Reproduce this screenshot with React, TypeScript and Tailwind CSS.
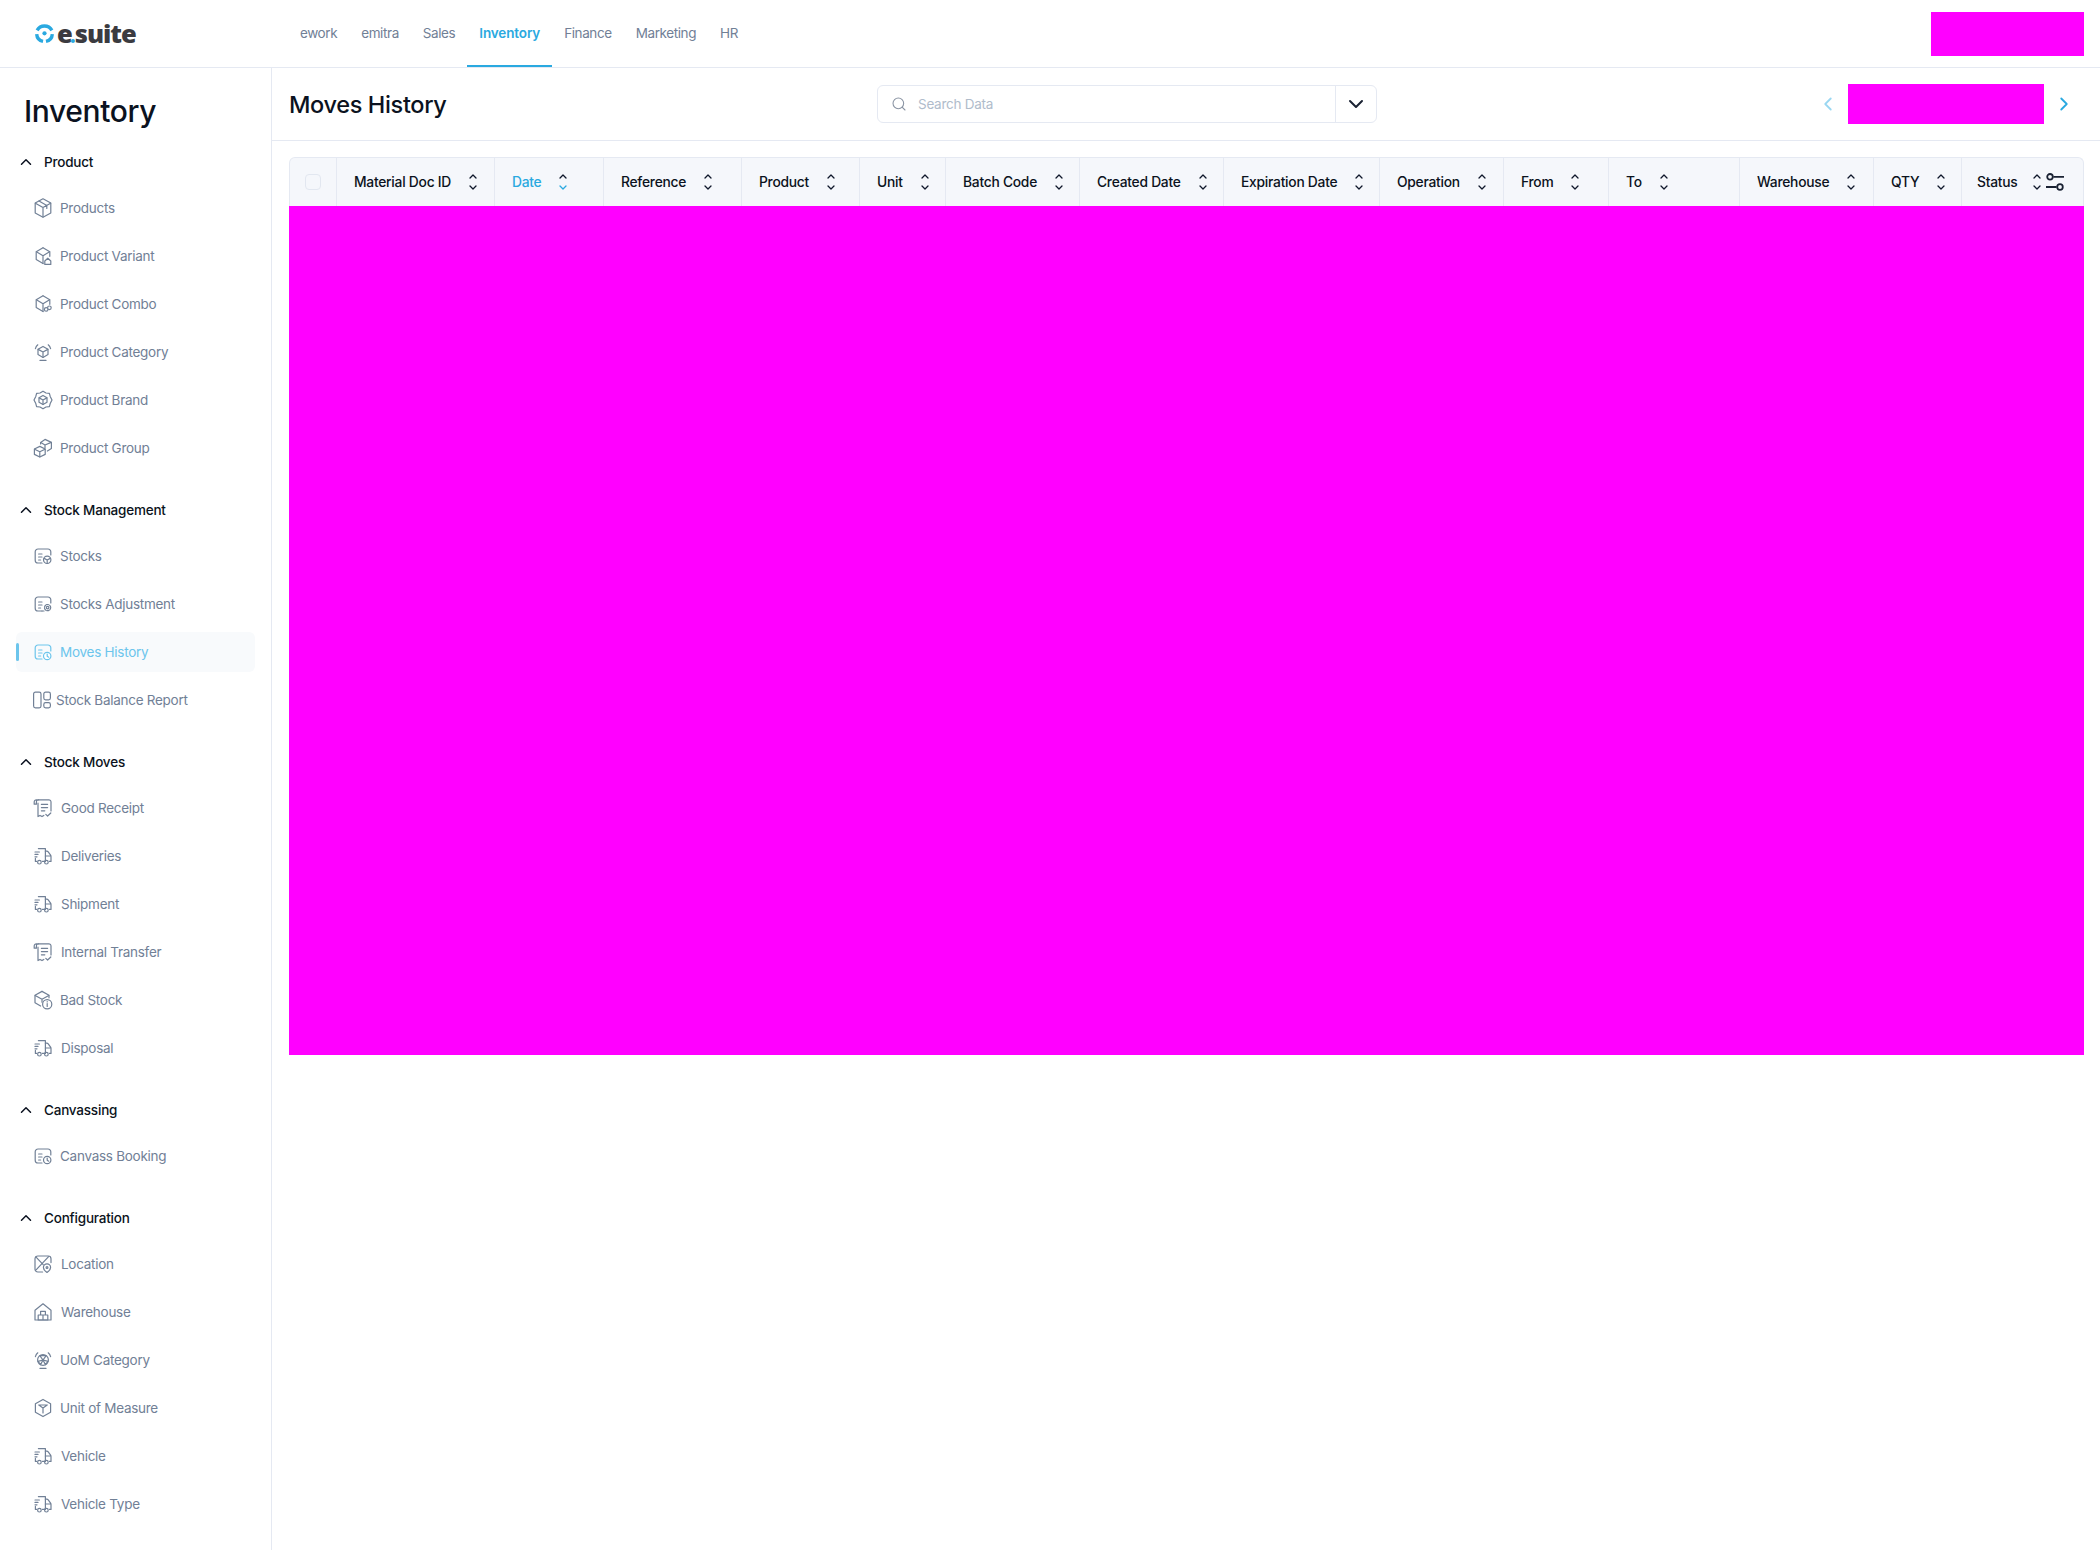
import { ChevronDown, ChevronLeft, ChevronRight, ChevronUp, Search } from 'lucide-react';
import type { ReactNode } from 'react';

type IconName =
  | 'box' | 'boxHome' | 'boxLink' | 'boxWifi' | 'brand' | 'group' | 'stock' | 'stockGear' | 'stockClock'
  | 'layout' | 'receipt' | 'truck' | 'boxInfo' | 'location' | 'warehouse' | 'fan' | 'unit';

const cube = (
  <>
    <path d="M10 1.8 16.8 5.7v4.6" />
    <path d="M10 1.8 3.2 5.7v7.8L10 17.6" />
    <path d="M3.4 5.8 10 9.7l6.6-3.9M10 9.7v7.8" />
  </>
);

const card = <path d="M9 17H5a2.8 2.8 0 0 1-2.8-2.8V5.8A2.8 2.8 0 0 1 5 3h10a2.8 2.8 0 0 1 2.8 2.8V9" />;
const lines = <path d="M5.6 8h3.4M5.6 11h3.4M5.6 14h2" />;

const truck = (
  <>
    <path d="M5.4 2.6h7v12.8H9.4M3.6 15.4H2.4V12.4" />
    <path d="M2 6h4.4M2 8.4h3M2 10.8h2" />
    <path d="M12.4 5.2h1.4c.6 0 1 .2 1.4.7l2.4 3.3c.3.4.4.8.4 1.3v4.9h-1.6M12.4 10h5.4" />
    <circle cx="6.4" cy="16.2" r="1.8" />
    <circle cx="13.4" cy="16.2" r="1.8" />
  </>
);

const icons: Record<IconName, ReactNode> = {
  box: (
    <>
      <path d="M10 .8 17.8 5v10L10 19.2 2.2 15V5z" />
      <path d="M2.4 5.2 10 9.6l7.6-4.4M10 9.6v9.4M6 3l7.8 4.4v3" />
    </>
  ),
  boxHome: (
    <>
      {cube}
      <path d="m11.8 15 3-2.8 3 2.8v3.4h-6z" fill="#fff" />
    </>
  ),
  boxLink: (
    <>
      {cube}
      <circle cx="13.2" cy="15.4" r="1.8" fill="#fff" />
      <circle cx="16.4" cy="13.8" r="1.8" fill="#fff" />
    </>
  ),
  boxWifi: (
    <>
      <path d="M10 4.4 15 7.2v5.4L10 15.4l-5-2.8V7.2z" />
      <path d="M5.2 7.4 10 10l4.8-2.6M10 10v5.2" />
      <path d="M2.4 6.6A8.4 8.4 0 0 1 4.8 2.8M17.6 6.6a8.4 8.4 0 0 0-2.4-3.8M7 18.4h6" />
    </>
  ),
  brand: (
    <>
      <path d="M10 1.2 13 3l3.4.4.8 3L19 10l-1.8 3.6-.8 3-3.4.4L10 18.8 7 17l-3.4-.4-.8-3L1 10l1.8-3.6.8-3L7 3z" />
      <path d="M10 5.4 14 7.7v4.6l-4 2.3-4-2.3V7.7z" />
      <path d="M6.2 7.9 10 10l3.8-2.1M10 10v4.4" />
    </>
  ),
  group: (
    <>
      <path d="M12 1.4 18.4 4.4v6.2L14.4 13M7.6 6V4.4L12 1.4" />
      <path d="M7.8 4.6 12 7l6.2-2.6M12 7v3" />
      <path d="M6.8 8.4 12.2 11v5.4L6.8 19 1.4 16.4V11z" />
      <path d="M1.6 11.2 6.8 13.8 12 11.2M6.8 13.8v5" />
    </>
  ),
  stock: (
    <>
      {card}
      {lines}
      <circle cx="14.2" cy="13.8" r="3.7" fill="#fff" />
      <path d="M11.2 12.4 14.2 14l3-1.6M14.2 14v3.4" />
    </>
  ),
  stockGear: (
    <>
      {card}
      {lines}
      <path d="M9 17h2" />
      <circle cx="14.6" cy="13.6" r="1.3" />
      <circle cx="14.6" cy="13.6" r="3.1" strokeDasharray="2.2 1.1" />
    </>
  ),
  stockClock: (
    <>
      {card}
      {lines}
      <circle cx="14.2" cy="14" r="3.7" fill="#fff" />
      <path d="M14.2 12v2.2l1.5 1" />
    </>
  ),
  layout: (
    <>
      <rect x="1.6" y="2.2" width="7.4" height="15.6" rx="1.8" />
      <rect x="11.8" y="2.2" width="6.6" height="7.6" rx="1.8" />
      <rect x="11.8" y="12.6" width="6.6" height="5.2" rx="1.8" />
    </>
  ),
  receipt: (
    <>
      <path d="M5.6 1.8h10.2a2.2 2.2 0 0 1 2.2 2.2v9" />
      <path d="M5.6 1.8A2.2 2.2 0 0 0 3.4 4v2.2H1.2V4a2.2 2.2 0 0 1 2.2-2.2z" />
      <path d="M5 5.2v13.4l2-1.2 2 1.2 1.8-1.2" />
      <path d="M8.4 6.4h6.2M8.4 9.6h6.2M8.4 12.8h3.4" />
      <path d="m12.8 16.4 1.8 1.6 3.2-3" />
    </>
  ),
  truck,
  boxInfo: (
    <>
      <path d="M9 1.4 16 5.2v2.6" />
      <path d="M9 1.4 2 5.2v7.6l5.6 3.2" />
      <path d="M2.2 5.4 9 9.2l6.8-3.8M9 9.2v3" />
      <circle cx="14.2" cy="14.2" r="4.6" fill="#fff" />
      <path d="M14.2 13.6v2.8M14.2 11.7v.2" />
    </>
  ),
  location: (
    <>
      <path d="M9.6 18H4.8a2.8 2.8 0 0 1-2.8-2.8V4.8A2.8 2.8 0 0 1 4.8 2h10.4A2.8 2.8 0 0 1 18 4.8v3.8" />
      <path d="m2.8 2.8 7.4 7.8M2.6 16.4 15.6 2.6" />
      <path d="M14 9.8a3.6 3.6 0 0 1 3.6 3.6c0 2.4-3.6 5-3.6 5s-3.6-2.6-3.6-5A3.6 3.6 0 0 1 14 9.8z" fill="#fff" />
      <circle cx="14" cy="13.4" r=".9" />
    </>
  ),
  warehouse: (
    <>
      <path d="M2 18V8.2l8-6.4 8 6.4V18z" />
      <path d="M7.6 9.4h4.8V13H7.6zM5.2 13H10v5H5.2zM10 13h4.8v5H10z" />
    </>
  ),
  fan: (
    <>
      <circle cx="10" cy="10" r="5.4" />
      <path d="M10 10 6.8 5.6h6.4zM10 10l-5 1.4 2.6 3.2zM10 10l5 1.4-2.6 3.2z" />
      <path d="M2.4 6.6A8.4 8.4 0 0 1 4.8 2.8M17.6 6.6a8.4 8.4 0 0 0-2.4-3.8M7 18.4h6" />
    </>
  ),
  unit: (
    <>
      <path d="M10 1.4 17.6 5.7v8.6L10 18.6l-7.6-4.3V5.7z" />
      <path d="M5.8 7 10 10l4.2-3M10 10v5M5.8 7h8.4" />
    </>
  ),
};

function MenuIcon({ name }: { name: IconName }) {
  return (
    <svg viewBox="0 0 20 20" fill="none" stroke="currentColor" strokeWidth="1.2" strokeLinecap="round" strokeLinejoin="round" className="h-5 w-5 shrink-0">
      {icons[name]}
    </svg>
  );
}

interface MenuItem {
  label: string;
  icon: IconName;
  active?: boolean;
}

const menu: { title: string; items: MenuItem[] }[] = [
  {
    title: 'Product',
    items: [
      { label: 'Products', icon: 'box' },
      { label: 'Product Variant', icon: 'boxHome' },
      { label: 'Product Combo', icon: 'boxLink' },
      { label: 'Product Category', icon: 'boxWifi' },
      { label: 'Product Brand', icon: 'brand' },
      { label: 'Product Group', icon: 'group' },
    ],
  },
  {
    title: 'Stock Management',
    items: [
      { label: 'Stocks', icon: 'stock' },
      { label: 'Stocks Adjustment', icon: 'stockGear' },
      { label: 'Moves History', icon: 'stockClock', active: true },
      { label: 'Stock Balance Report', icon: 'layout' },
    ],
  },
  {
    title: 'Stock Moves',
    items: [
      { label: 'Good Receipt', icon: 'receipt' },
      { label: 'Deliveries', icon: 'truck' },
      { label: 'Shipment', icon: 'truck' },
      { label: 'Internal Transfer', icon: 'receipt' },
      { label: 'Bad Stock', icon: 'boxInfo' },
      { label: 'Disposal', icon: 'truck' },
    ],
  },
  { title: 'Canvassing', items: [{ label: 'Canvass Booking', icon: 'stockClock' }] },
  {
    title: 'Configuration',
    items: [
      { label: 'Location', icon: 'location' },
      { label: 'Warehouse', icon: 'warehouse' },
      { label: 'UoM Category', icon: 'fan' },
      { label: 'Unit of Measure', icon: 'unit' },
      { label: 'Vehicle', icon: 'truck' },
      { label: 'Vehicle Type', icon: 'truck' },
    ],
  },
];

const modules = ['ework', 'emitra', 'Sales', 'Inventory', 'Finance', 'Marketing', 'HR'];

const columns = [
  { label: 'Material Doc ID', width: 'w-[158px]' },
  { label: 'Date', width: 'w-[109px]', active: true },
  { label: 'Reference', width: 'w-[138px]' },
  { label: 'Product', width: 'w-[118px]' },
  { label: 'Unit', width: 'w-[86px]' },
  { label: 'Batch Code', width: 'w-[134px]' },
  { label: 'Created Date', width: 'w-[144px]' },
  { label: 'Expiration Date', width: 'w-[156px]' },
  { label: 'Operation', width: 'w-[124px]' },
  { label: 'From', width: 'w-[105px]' },
  { label: 'To', width: 'w-[131px]' },
  { label: 'Warehouse', width: 'w-[134px]' },
  { label: 'QTY', width: 'w-[88px]' },
];

function SortIcon({ active }: { active?: boolean }) {
  return (
    <svg viewBox="0 0 12 20" fill="none" stroke="#0f172a" strokeWidth="1.3" strokeLinecap="round" strokeLinejoin="round" className="h-5 w-3 shrink-0">
      <path d="m3 6 3-3 3 3" />
      <path d="m3 14 3 3 3-3" stroke={active ? '#2aa9e0' : '#0f172a'} />
    </svg>
  );
}

function Logo() {
  return (
    <div className="flex w-[288px] items-center pl-[35px]">
      <svg viewBox="0 0 18 18" className="h-[19px] w-[19px] shrink-0" fill="none" stroke="#2aa9e0" strokeWidth="3.2">
        <path d="M2 6a8 8 0 0 1 14 0" />
        <path d="M1.6 9.5A7.6 7.6 0 0 0 7.6 16.4M16.4 9.5a7.6 7.6 0 0 1-6 6.9" />
        <circle cx="9" cy="8.8" r="2" fill="#2aa9e0" stroke="none" />
      </svg>
      <div className="ml-[3px] flex items-baseline font-['Open_Sans',sans-serif] text-[25.5px] leading-none font-extrabold tracking-[-0.04em] text-[#3b3b40]">
        e
        <span className="relative h-1 w-[3px]">
          <span className="absolute bottom-0 -left-px h-1 w-1 rounded-full bg-[#2aa9e0]" />
        </span>
        suite
      </div>
    </div>
  );
}

function itemGap(icon: IconName) {
  if (icon === 'layout') return 'gap-1 -ml-px';
  if (icon === 'truck' || icon === 'receipt' || icon === 'location' || icon === 'warehouse') return 'gap-2';
  return 'gap-[7px]';
}

function Sidebar() {
  return (
    <aside className="w-[272px] shrink-0 border-r border-[#e5e9f2] pl-4">
      <h1 className="mt-[25px] ml-2 text-[30px] leading-9 font-medium tracking-[-0.012em] text-[#0b1220]">Inventory</h1>
      <div className="mt-[23px] flex flex-col gap-8">
        {menu.map((group) => (
          <section key={group.title}>
            <div className="flex h-5 items-center gap-[9px] pl-px text-[13.5px] font-medium tracking-[-0.015em] text-[#0b1220]">
              <ChevronUp className="h-[18px] w-[18px]" strokeWidth={2} />
              {group.title}
            </div>
            <ul className="mt-4 flex flex-col gap-2">
              {group.items.map((item) => (
                <li
                  key={item.label}
                  className={
                    item.active
                      ? `relative flex h-10 w-[239px] items-center rounded-md bg-[#f8fafc] pl-[17px] text-[13.5px] tracking-[-0.02em] text-[#6cc5ec] ${itemGap(item.icon)}`
                      : `flex h-10 w-[239px] items-center pl-[17px] text-[13.5px] tracking-[-0.02em] text-[#718096] ${itemGap(item.icon)}`
                  }
                >
                  {item.active && <span className="absolute top-[11px] left-0 h-[18px] w-[3px] rounded-sm bg-[#6cc5ec]" />}
                  <MenuIcon name={item.icon} />
                  {item.label}
                </li>
              ))}
            </ul>
          </section>
        ))}
      </div>
    </aside>
  );
}

function Toolbar() {
  return (
    <div className="flex h-[73px] items-center border-b border-[#e5e9f2] pr-[25px]">
      <h2 className="w-[605px] pt-0.5 pl-[17px] text-[23.5px] leading-8 font-medium tracking-[-0.015em] text-[#0b1220]">Moves History</h2>
      <div className="flex h-[38px] w-[500px] items-center rounded-md border border-[#e5e9f2]">
        <Search className="ml-[13px] h-4 w-4 text-[#8a94a3]" strokeWidth={1.6} />
        <span className="ml-[11px] flex-1 text-[13.5px] tracking-[-0.02em] text-[#b0bccb]">Search Data</span>
        <div className="flex h-full w-[41px] items-center justify-center border-l border-[#e5e9f2]">
          <ChevronDown className="h-6 w-6 text-[#1a2233]" strokeWidth={2} />
        </div>
      </div>
      <div className="ml-auto flex items-center gap-[9px]">
        <ChevronLeft className="h-[22px] w-[22px] text-[#9ad7f2]" strokeWidth={2} />
        <div className="h-10 w-[196px] bg-[#ff00ff]" />
        <ChevronRight className="h-[22px] w-[22px] text-[#2aa9e0]" strokeWidth={2} />
      </div>
    </div>
  );
}

function MovesTable() {
  return (
    <div className="mt-4 mr-4 ml-[17px]">
      <div className="flex h-[49px] rounded-t-md border border-b-0 border-[#e5e9f2] bg-[#f5f7fb] text-[13.8px] font-medium tracking-[-0.018em] text-[#0b1220]">
        <div className="flex w-[47px] shrink-0 items-center justify-center border-r border-[#e5e9f2]">
          <span className="h-4 w-4 rounded border border-[#e2e7f0]" />
        </div>
        {columns.map((col) => (
          <div key={col.label} className={`flex shrink-0 items-center gap-4 border-r border-[#e5e9f2] pl-[17px] ${col.width}`}>
            <span className={col.active ? 'text-[#2aa9e0]' : ''}>{col.label}</span>
            <SortIcon active={col.active} />
          </div>
        ))}
        <div className="flex flex-1 items-center pr-[19px] pl-[15px]">
          <span>Status</span>
          <span className="ml-[14px]">
            <SortIcon />
          </span>
          <svg viewBox="0 0 18 18" fill="none" stroke="#1a2233" strokeWidth="1.8" className="ml-auto h-[18px] w-[18px]">
            <circle cx="4" cy="3.8" r="2.8" />
            <path d="M7.4 3.8H18M0 14h10.6" />
            <circle cx="14" cy="14" r="2.8" />
          </svg>
        </div>
      </div>
      <div className="h-[849px] bg-[#ff00ff]" />
    </div>
  );
}

export default function App() {
  return (
    <div className="flex h-[1550px] flex-col overflow-hidden bg-white font-['Inter',sans-serif]">
      <header className="flex h-[68px] shrink-0 items-stretch border-b border-[#e5e9f2] pr-4">
        <Logo />
        <nav className="flex text-[13.5px] tracking-[-0.03em] text-[#718096]">
          {modules.map((name) =>
            name === 'Inventory' ? (
              <span key={name} className="flex items-center border-b-2 border-[#2aa9e0] px-3 pt-0.5 font-semibold tracking-[-0.01em] text-[#2aa9e0]">
                {name}
              </span>
            ) : (
              <span key={name} className="flex items-center px-3">
                {name}
              </span>
            ),
          )}
        </nav>
        <div className="mt-3 ml-auto h-11 w-[153px] bg-[#ff00ff]" />
      </header>
      <div className="flex min-h-0 flex-1">
        <Sidebar />
        <main className="min-w-0 flex-1">
          <Toolbar />
          <MovesTable />
        </main>
      </div>
    </div>
  );
}
